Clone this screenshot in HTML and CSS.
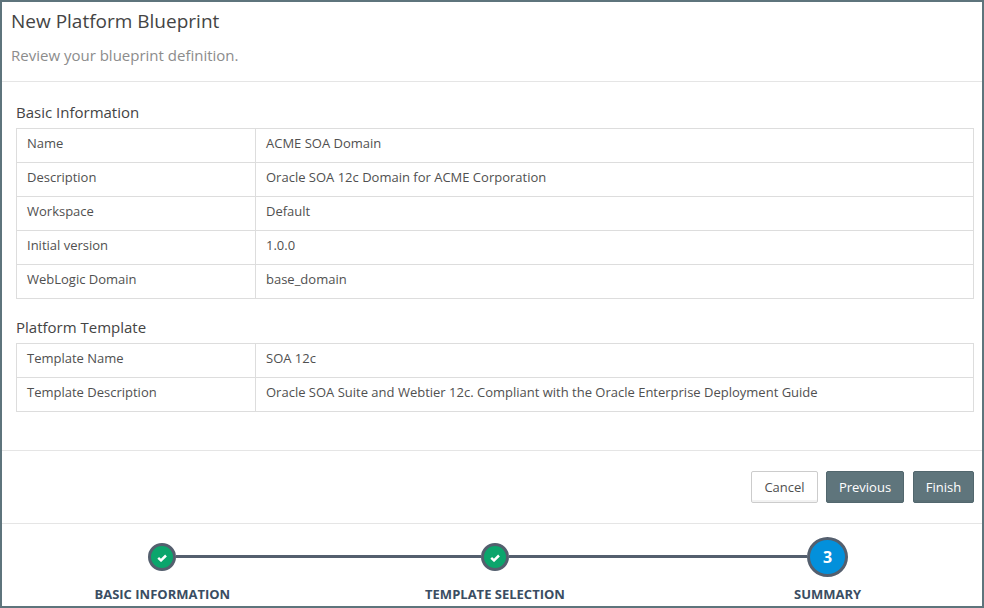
FILE: index.html
```html
<!DOCTYPE html>
<html lang="en">
<head>
<meta charset="utf-8">
<title>New Platform Blueprint</title>
<link rel="stylesheet" href="styles.css">
</head>
<body>
<main class="wizard">
  <header class="header">
    <h1 class="title">New Platform Blueprint</h1>
    <p class="subtitle">Review your blueprint definition.</p>
  </header>
  <div class="content">
    <section class="section">
      <h2 class="heading">Basic Information</h2>
      <dl class="table">
        <div class="row"><dt>Name</dt><dd>ACME SOA Domain</dd></div>
        <div class="row"><dt>Description</dt><dd>Oracle SOA 12c Domain for ACME Corporation</dd></div>
        <div class="row"><dt>Workspace</dt><dd>Default</dd></div>
        <div class="row"><dt>Initial version</dt><dd>1.0.0</dd></div>
        <div class="row"><dt>WebLogic Domain</dt><dd>base_domain</dd></div>
      </dl>
    </section>
    <section class="section">
      <h2 class="heading">Platform Template</h2>
      <dl class="table">
        <div class="row"><dt>Template Name</dt><dd>SOA 12c</dd></div>
        <div class="row"><dt>Template Description</dt><dd>Oracle SOA Suite and Webtier 12c. Compliant with the Oracle Enterprise Deployment Guide</dd></div>
      </dl>
    </section>
  </div>
  <div class="actions">
    <button class="btn btn-cancel" type="button">Cancel</button>
    <button class="btn btn-previous" type="button">Previous</button>
    <button class="btn btn-finish" type="button">Finish</button>
  </div>
  <ol class="steps">
    <li class="step">
      <div class="track"><span class="line hidden"></span><span class="dot"><svg class="check" viewBox="0 0 10 8"><path d="M1.2 3.9 4 6.4 9 1.5"/></svg></span><span class="line"></span></div>
      <span class="label">BASIC INFORMATION</span>
    </li>
    <li class="step">
      <div class="track"><span class="line"></span><span class="dot"><svg class="check" viewBox="0 0 10 8"><path d="M1.2 3.9 4 6.4 9 1.5"/></svg></span><span class="line"></span></div>
      <span class="label">TEMPLATE SELECTION</span>
    </li>
    <li class="step">
      <div class="track"><span class="line"></span><span class="dot current">3</span><span class="line hidden"></span></div>
      <span class="label">SUMMARY</span>
    </li>
  </ol>
</main>
</body>
</html>
```
FILE: styles.css
```css
* { box-sizing: border-box; }

body {
  margin: 0;
  font: 13px/18px "Open Sans", sans-serif;
  color: #505050;
  background: #fff;
}

h1, h2, p, dl, dd, ol { margin: 0; padding: 0; font-weight: 400; }

.wizard {
  display: flex;
  flex-direction: column;
  width: 984px;
  height: 608px;
  border: 2px solid #5e747c;
  overflow: hidden;
}

.header {
  height: 80px;
  padding: 6px 9px 0;
  border-bottom: 1px solid #e5e5e5;
}

.title { font-size: 19px; line-height: 26px; color: #444; }
.subtitle { margin-top: 10px; font-size: 15px; line-height: 22px; color: #8c8c8c; }

.content {
  height: 369px;
  padding: 19px 8px 0 14px;
  border-bottom: 1px solid #e5e5e5;
}

.section + .section { margin-top: 17px; }
.heading { height: 27px; font-size: 15px; line-height: 22px; color: #444; }

.table { border: 1px solid #ddd; }
.row { display: flex; height: 34px; border-bottom: 1px solid #ddd; }
.row:last-child { height: 33px; border-bottom: 0; }
.row dt { width: 239px; padding: 5px 10px; border-right: 1px solid #ddd; }
.row dd { flex: 1; padding: 5px 10px; }

.actions {
  display: flex;
  justify-content: flex-end;
  height: 73px;
  padding: 20px 8px 0;
  border-bottom: 1px solid #e5e5e5;
}

.btn {
  height: 32px;
  padding: 0;
  border: 1px solid #52676e;
  border-radius: 2px;
  background: #5f757c;
  box-shadow: inset 0 -2px 0 rgba(0, 0, 0, .05);
  color: #fff;
  font: 13px/18px "Open Sans", sans-serif;
}

.btn-cancel { width: 67px; border-color: #ccc; background: #fff; color: #505050; }
.btn-previous { width: 78px; margin-left: 8px; }
.btn-finish { width: 61px; margin-left: 9px; }

.steps {
  display: flex;
  margin: 0 -12px 0 -6px;
  list-style: none;
}

.step { flex: 0 0 332.67px; text-align: center; }
.track { display: flex; align-items: center; height: 40px; margin-top: 13px; }
.line { flex: 1; height: 3px; margin-top: -1px; background: #545f6e; }
.line.hidden { background: none; }

.dot {
  display: flex;
  align-items: center;
  justify-content: center;
  width: 28px;
  height: 28px;
  border: 3px solid #545f6e;
  border-radius: 50%;
  background: #0ba56c;
}

.dot.current {
  width: 41px;
  height: 40px;
  background: #0390db;
  color: #fff;
  font-size: 16px;
  font-weight: 700;
}

.check { width: 10px; height: 8px; margin-top: 2px; }
.check path { fill: none; stroke: #fff; stroke-width: 2.5; }

.label { display: block; margin-top: 8px; font-size: 13px; font-weight: 700; color: #3a4d62; }
```
